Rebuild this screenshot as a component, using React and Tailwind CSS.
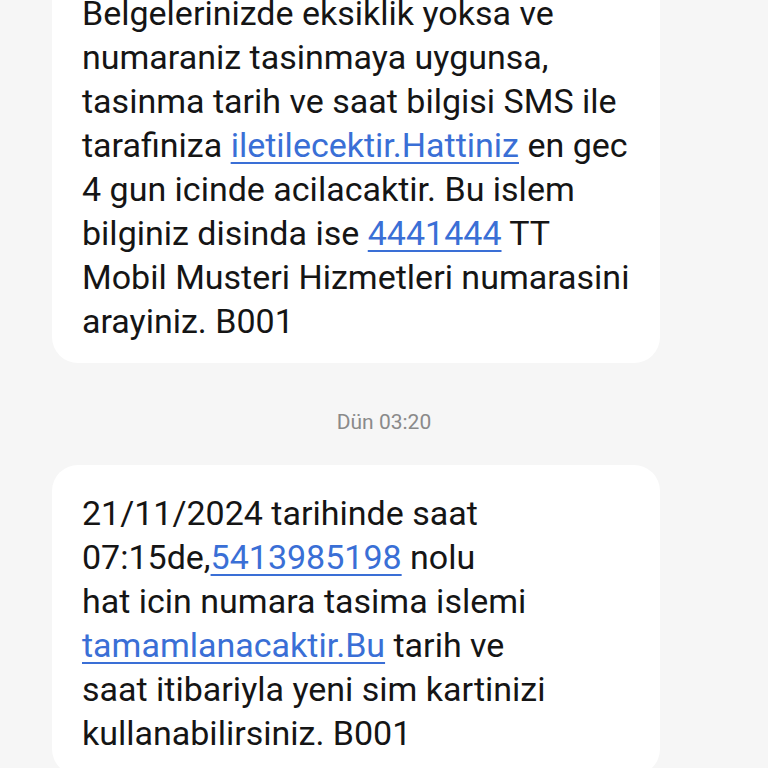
import React from 'react';

const Link = ({ children }) => (
  <span className="text-[#3a6fd6] underline decoration-2 underline-offset-[5px]">{children}</span>
);

const first = [
  ['Belgelerinizde eksiklik yoksa ve'],
  ['numaraniz tasinmaya uygunsa,'],
  ['tasinma tarih ve saat bilgisi SMS ile'],
  ['tarafiniza ', <Link key="l">iletilecektir.Hattiniz</Link>, ' en gec'],
  ['4 gun icinde acilacaktir. Bu islem'],
  ['bilginiz disinda ise ', <Link key="l">4441444</Link>, ' TT'],
  ['Mobil Musteri Hizmetleri numarasini'],
  ['arayiniz. B001'],
];

const second = [
  ['21/11/2024 tarihinde saat'],
  ['07:15de,', <Link key="l">5413985198</Link>, ' nolu'],
  ['hat icin numara tasima islemi'],
  [<Link key="l">tamamlanacaktir.Bu</Link>, ' tarih ve'],
  ['saat itibariyla yeni sim kartinizi'],
  ['kullanabilirsiniz. B001'],
];

const Bubble = ({ lines, className = '' }) => (
  <div className={`ml-[52px] mr-[108px] bg-white rounded-[26px] px-[30px] ${className}`}>
    {lines.map((parts, i) => (
      <div key={i} className="whitespace-nowrap h-[44px] leading-[44px]">{parts}</div>
    ))}
  </div>
);

export default function App() {
  return (
    <div
      className="w-[768px] h-[768px] overflow-hidden bg-[#f6f6f6] text-[#151515] text-[34px]"
      style={{ fontFamily: 'Roboto, "Noto Sans", sans-serif' }}
    >
      <div className="mt-[-35px] flex flex-col">
        <Bubble lines={first} className="pt-[26px] pb-[20px]" />
        <div className="pt-[47px] pb-[30px] leading-[25px] text-center text-[21px] text-[#8a8a8a]">Dün 03:20</div>
        <Bubble lines={second} className="pt-[26px] pb-[20px]" />
      </div>
    </div>
  );
}
